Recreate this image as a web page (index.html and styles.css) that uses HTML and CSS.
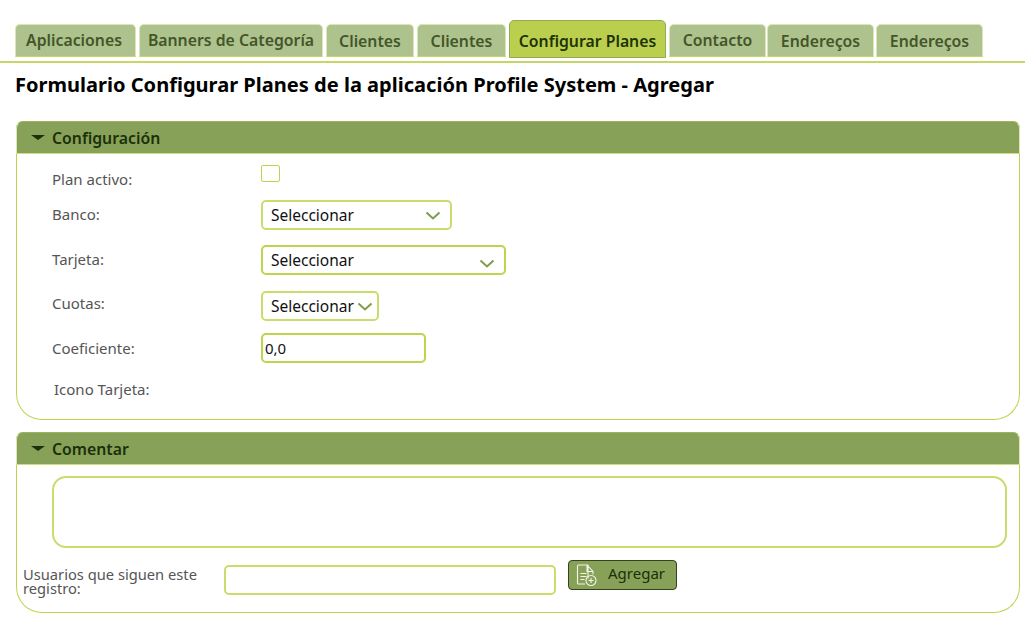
FILE: index.html
```html
<!DOCTYPE html>
<html lang="es">
<head>
<meta charset="utf-8">
<title>Formulario Configurar Planes</title>
<link rel="stylesheet" href="styles.css">
</head>
<body>
<nav class="tabs">
  <a class="tab w1">Aplicaciones</a>
  <a class="tab w2">Banners de Categoría</a>
  <a class="tab w3">Clientes</a>
  <a class="tab w3b">Clientes</a>
  <a class="tab active">Configurar Planes</a>
  <a class="tab w5">Contacto</a>
  <a class="tab w6">Endereços</a>
  <a class="tab w6">Endereços</a>
</nav>
<h1 class="title">Formulario Configurar Planes de la aplicación Profile System - Agregar</h1>

<section class="panel panel-config">
  <header class="panel-head"><span class="caret"></span>Configuración</header>
  <div class="form">
    <div class="row row-check"><label class="lbl">Plan activo:</label><span class="check"></span></div>
    <div class="row row-banco"><label class="lbl up1">Banco:</label>
      <div class="select s1"><span>Seleccionar</span><svg class="chev" viewBox="0 0 16 9"><path d="M1.500 1.500 8 7.500l6.500-6"/></svg></div></div>
    <div class="row row-tarjeta"><label class="lbl up1">Tarjeta:</label>
      <div class="select s2"><span>Seleccionar</span><svg class="chev low" viewBox="0 0 16 9"><path d="M1.500 1.500 8 7.500l6.500-6"/></svg></div></div>
    <div class="row row-cuotas"><label class="lbl up3">Cuotas:</label>
      <div class="select s3"><span>Seleccionar</span><svg class="chev" viewBox="0 0 16 9"><path d="M1.500 1.500 8 7.500l6.500-6"/></svg></div></div>
    <div class="row row-coef"><label class="lbl">Coeficiente:</label><div class="input coef">0,0</div></div>
    <div class="row row-icono"><label class="lbl indent">Icono Tarjeta:</label></div>
  </div>
</section>

<section class="panel panel-comment">
  <header class="panel-head"><span class="caret"></span>Comentar</header>
  <div class="comment-box"></div>
  <div class="follow">
    <label class="follow-lbl">Usuarios que siguen este registro:</label>
    <div class="input follow-input"></div>
    <button class="btn" type="button">
      <svg class="btn-icon" viewBox="0 0 22 24"><path d="M12 15.500V2H2.500a1 1 0 0 0-1 1v17a1 1 0 0 0 1 1H9M11 2l6 6.500v3M11 2v6.500h6M4.500 10.500h6M4.500 13.500h6M4.500 16.500h4"/><circle cx="15" cy="17.500" r="5"/><path d="M15 15v5M12.500 17.500h5"/></svg>
      <span class="btn-text">Agregar</span>
    </button>
  </div>
</section>
</body>
</html>
```

FILE: styles.css
```css
* { box-sizing: border-box; }
html, body { margin: 0; padding: 0; }
body {
  width: 1025px;
  height: 636px;
  overflow: hidden;
  background: #fff;
  font-family: "Noto Sans", "Open Sans", sans-serif;
  color: #555;
}
.tabs {
  display: flex;
  align-items: flex-end;
  height: 63px;
  padding: 20px 0 4px 15px;
  border-bottom: 2px solid #c4d768;
}
.tab {
  display: flex;
  align-items: center;
  justify-content: center;
  height: 33px;
  margin-right: 3px;
  background: #aec28d;
  border: 1px solid #dbe6b4;
  border-bottom: 1px solid #c4d768;
  border-radius: 5px 5px 0 0;
  color: #43562a;
  font-size: 15.800px;
  font-weight: 600;
  white-space: nowrap;
}
.w1 { width: 121px; padding: 0 3px 2px 0; }
.w2 { width: 184px; padding-bottom: 2px; }
.w3 { width: 88px; }
.w3b { width: 89px; }
.w5 { width: 97px; margin-right: 1px; padding-bottom: 2px; }
.w6 { width: 107px; margin-right: 2px; }
.tab.active {
  width: 157px;
  height: 38px;
  margin-bottom: -1px;
  padding-top: 4px;
  background: #bbcf4e;
  border-color: #93a95a;
  color: #1f3208;
}
.title {
  margin: 9px 0 23px 15px;
  height: 26px;
  font-size: 20.060px;
  line-height: 26px;
  font-weight: 700;
  color: #000;
  white-space: nowrap;
}
.panel {
  width: 1004px;
  margin-left: 16px;
  border: 1px solid #bdd44f;
  border-top: 0;
  border-radius: 7px 7px 26px 26px;
}
.panel-config { height: 299px; margin-bottom: 12px; }
.panel-comment { height: 181px; }
.panel-head {
  display: flex;
  align-items: center;
  height: 33px;
  margin: 0 -1px;
  padding-left: 14px;
  background: #87a258;
  border: 1px solid #dbe6b4;
  border-top: 1px solid #9cb35f;
  border-bottom: 1px solid #cbdc85;
  border-radius: 7px 7px 0 0;
  color: #1c2f0a;
  font-size: 15.800px;
  font-weight: 600;
}
.caret {
  width: 0;
  height: 0;
  margin-right: 7px;
  border-left: 7px solid transparent;
  border-right: 7px solid transparent;
  border-top: 5px solid #1c2f0a;
}
.form { padding: 0 0 0 35px; }
.row { display: flex; align-items: center; font-size: 15px; }
.lbl { width: 209px; flex: none; color: #555; }
.indent { padding-left: 2px; }
.up1 { position: relative; top: -1px; }
.up3 { position: relative; top: -3px; }
.row-check { height: 30px; margin-top: 10px; margin-bottom: 6px; align-items: flex-start; }
.row-check .lbl { padding-top: 5px; }
.row-banco { height: 30px; margin-bottom: 15px; }
.row-tarjeta { height: 30px; margin-bottom: 16px; }
.row-cuotas { height: 30px; margin-bottom: 12px; }
.row-coef { height: 30px; margin-bottom: 11px; }
.row-icono { height: 30px; }
.check {
  width: 19px;
  height: 17px;
  margin-top: 1px;
  border: 1px solid #bdd44f;
  border-radius: 2px;
}
.select, .input {
  display: flex;
  align-items: center;
  height: 30px;
  border: 2px solid #bdd44f;
  border-radius: 5px;
  background: #fff;
  color: #111;
  font-size: 15px;
}
.select { position: relative; padding-left: 8px; font-size: 15.500px; }
.s1, .s3 { border-color: #c8de6c; }
.s1 { width: 191px; }
.s2 { width: 245px; }
.s3 { width: 118px; }
.chev {
  position: absolute;
  right: 9px;
  top: 9px;
  width: 16px;
  height: 9px;
  fill: none;
  stroke: #7f9c4c;
  stroke-width: 2;
}
.chev.low { top: 12px; }
.s3 .chev { right: 4px; top: 9px; }
.coef { width: 165px; padding-left: 2px; }
.comment-box {
  width: 955px;
  height: 72px;
  margin: 11px 0 0 35px;
  border: 2px solid #c8de6c;
  border-radius: 14px;
}
.follow { display: flex; align-items: flex-start; margin-top: 12px; padding-left: 6px; }
.follow-lbl {
  width: 201px;
  flex: none;
  padding-top: 7px;
  color: #555;
  font-size: 14.700px;
  line-height: 14px;
}
.follow-input { width: 332px; margin-top: 5px; border-color: #c8de6c; }
.btn {
  display: flex;
  align-items: center;
  width: 109px;
  height: 30px;
  margin: 0 0 0 12px;
  padding: 0 0 0 7px;
  background: #87a258;
  border: 1px solid #33431c;
  border-radius: 4px;
  color: #1c2f0a;
  font-family: inherit;
  font-size: 15px;
}
.btn-text { padding-bottom: 5px; }
.btn-icon {
  width: 22px;
  height: 24px;
  margin-right: 10px;
  fill: none;
  stroke: #f2f5e6;
  stroke-width: 1.100;
}
```
